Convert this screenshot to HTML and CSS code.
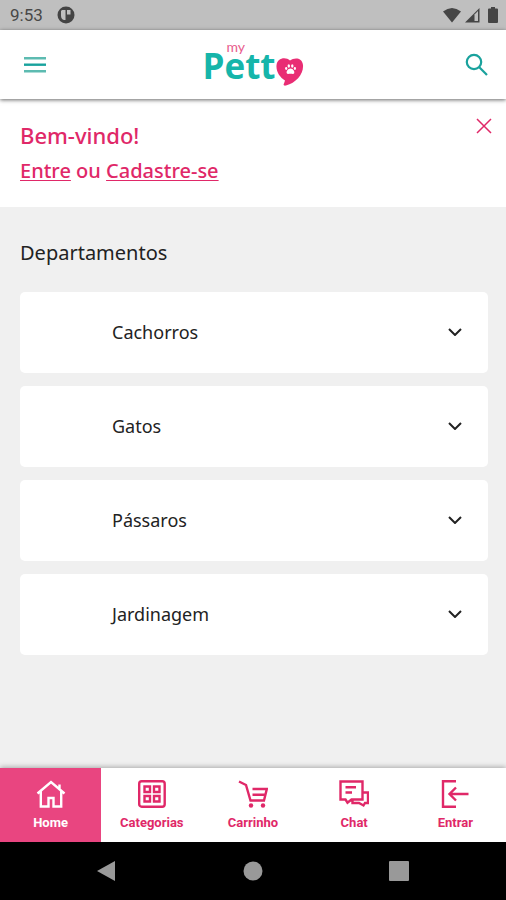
FILE: index.html
```html
<!DOCTYPE html>
<html lang="pt-BR">
<head>
<meta charset="utf-8">
<meta name="viewport" content="width=device-width, initial-scale=1">
<title>my Pett</title>
<link rel="stylesheet" href="styles.css">
</head>
<body>
<div class="status">
  <span class="clock">9:53</span>
  <svg class="notice" width="18" height="18" viewBox="0 0 18 18"><circle cx="9" cy="9" r="8.500" fill="#444"/><path d="M5 4h3.500v10H7C5 13.500 4 12 4 9.500V5zM10 4h3.500v4.500H10z" fill="#bfbfbf"/></svg>
  <span class="signals">
    <svg width="20" height="16" viewBox="0 0 20 16"><path d="M1 4.500Q10-2.500 19 4.500L10 15.500z" fill="#454545"/></svg>
    <svg width="16" height="16" viewBox="0 0 16 16"><path d="M1 15.500L15.500 1v14.500z" fill="#454545"/><path d="M10.500 7.500L14 4v10h-3.500z" fill="#bfbfbf"/></svg>
    <svg width="10" height="16" viewBox="0 0 10 16"><path d="M3 0h4v1.500h2q1 0 1 1V15q0 1-1 1H1q-1 0-1-1V2.500q0-1 1-1h2z" fill="#454545"/></svg>
  </span>
</div>
<header class="header">
  <button class="menu-button" aria-label="Menu"><svg width="24" height="18" viewBox="0 0 24 18" fill="none" stroke-width="2.400"><path d="M1 2.200h22M1 15.200h22" stroke="#5dbbb1"/><path d="M1 8.700h22" stroke="#18a29d"/></svg></button>
  <a class="logo" href="#">
    <span class="logo-text">
      <span class="logo-small">my</span>
      <span class="logo-word">Pett</span>
    </span>
    <svg width="28" height="30" viewBox="0 0 28 30"><path d="M14 3.500C18 .5 26 0 27 8c.8 9-7 18-17 20.500-2 .5-3-.5-2-2l1-3C4 20.500 0 15 .5 8.500 1 1 9.500-.5 14 3.500z" fill="#e92d74"/><g fill="#fff"><path d="M14.500 11.500c2.500 0 4.500 3 3.700 4.700-.6 1.200-2 .5-3.700.5s-3.100.7-3.700-.5c-.8-1.700 1.200-4.700 3.700-4.700z"/><ellipse cx="12.800" cy="9" rx="1.200" ry="1.700"/><ellipse cx="16.300" cy="9" rx="1.200" ry="1.700"/><ellipse cx="10.200" cy="11.500" rx="1.100" ry="1.400"/><ellipse cx="18.900" cy="11.500" rx="1.100" ry="1.400"/></g></svg>
  </a>
  <button class="search-button" aria-label="Buscar"><svg width="24" height="24" viewBox="0 0 24 24" fill="none" stroke="#1aa29d" stroke-width="2.200"><circle cx="9" cy="9" r="7.200"/><path d="M14.300 14.300l7.700 7.700"/></svg></button>
</header>
<main class="main">
  <section class="welcome">
    <div>
      <h1 class="greeting">Bem-vindo!</h1>
      <p class="access"><a href="#">Entre</a> ou <a href="#">Cadastre-se</a></p>
    </div>
    <button class="close" aria-label="Fechar"><svg width="16" height="16" viewBox="0 0 16 16" stroke="#e02868" stroke-width="1.500"><path d="M1 1l14 14M15 1L1 15"/></svg></button>
  </section>
  <section class="departments">
    <h2 class="heading">Departamentos</h2>
    <div class="list">
      <button class="card">Cachorros<svg class="chevron" viewBox="0 0 14 8"><path d="M1 1l6 6 6-6"/></svg></button>
      <button class="card">Gatos<svg class="chevron" viewBox="0 0 14 8"><path d="M1 1l6 6 6-6"/></svg></button>
      <button class="card">Pássaros<svg class="chevron" viewBox="0 0 14 8"><path d="M1 1l6 6 6-6"/></svg></button>
      <button class="card">Jardinagem<svg class="chevron" viewBox="0 0 14 8"><path d="M1 1l6 6 6-6"/></svg></button>
    </div>
  </section>
</main>
<nav class="tabs">
  <a class="tab active" href="#"><svg viewBox="0 0 30 28"><path d="M1.500 13.500L15 2l13.500 11.500M4.800 11.500V26.500h7.700v-8.500h5v8.500h7.700V11.500M23.500 9V4.500"/></svg>Home</a>
  <a class="tab" href="#"><svg viewBox="0 0 30 28"><rect x="2.200" y="1.200" width="25.500" height="25.500" rx="2.500"/><path d="M7.500 6.500h5.500v5.500H7.500zM17 6.500h5.500v5.500H17zM7.500 16h5.500v5.500H7.500zM17 16h5.500v5.500H17z"/></svg>Categorias</a>
  <a class="tab" href="#"><svg viewBox="0 0 30 28"><path d="M1 1.500l7 3.500 4.500 15.500h14.500M14.500 9h14.300l-2.800 11.500M14.500 14.800h12.500"/><g fill="currentColor" stroke="none"><circle cx="13" cy="25.500" r="2.200"/><circle cx="25" cy="25.500" r="2.200"/></g></svg>Carrinho</a>
  <a class="tab" href="#"><svg viewBox="0 0 30 28"><path d="M1.500 1.500h22v18H12.500l-4 3.200-2-3.200h-5zM6.500 7.200h10.500M6.500 12.500h6.500M23.500 12.500H29v10.500h-3l-1.500 2.500-4.500-2.500h-6.500v-3.500"/></svg>Chat</a>
  <a class="tab" href="#"><svg viewBox="0 0 30 28"><path d="M16 1.200H3v25.500h13M28.500 14H10M16 7.500L9.500 14l6.500 6.500"/></svg>Entrar</a>
</nav>
<div class="system">
  <button aria-label="Voltar"><svg width="20" height="22" viewBox="0 0 20 22"><path d="M0 11L18 1v20z"/></svg></button>
  <button aria-label="Início"><svg width="20" height="20" viewBox="0 0 20 20"><circle cx="10" cy="10" r="9.500"/></svg></button>
  <button aria-label="Recentes"><svg width="20" height="20" viewBox="0 0 20 20"><rect width="20" height="20" rx="1"/></svg></button>
</div>
</body>
</html>
```
FILE: styles.css
```css
* { box-sizing: border-box; }
body {
  margin: 0;
  min-height: 100vh;
  display: flex;
  flex-direction: column;
  background: #f0f0f0;
  color: #222;
  font-family: "Noto Sans", "Open Sans", sans-serif;
}
button {
  border: 0;
  padding: 0;
  background: none;
  color: inherit;
  font: inherit;
}
svg { display: block; }
h1, h2, p { margin: 0; font-weight: 500; }

.status {
  height: 30px;
  display: flex;
  align-items: center;
  gap: 14px;
  padding: 0 8px 0 10px;
  background: #bfbfbf;
  color: #484848;
  font: 400 17px/20px Roboto, sans-serif;
}
.signals {
  display: flex;
  gap: 8px;
  margin-left: auto;
}
.signals svg:first-child { margin-right: -6px; }

.header {
  position: relative;
  height: 69px;
  display: grid;
  grid-template-columns: 1fr auto 1fr;
  align-items: center;
  padding: 0 17px;
  background: #fff;
  box-shadow: 0 1px 4px rgba(0, 0, 0, 0.6);
}
.menu-button { justify-self: start; padding-left: 6px; }
.search-button { justify-self: end; }
.logo {
  display: flex;
  align-items: flex-end;
  text-decoration: none;
}
.logo-text {
  display: flex;
  flex-direction: column;
  padding-bottom: 6px;
}
.logo-word {
  color: #16b5aa;
  font: 700 35px/30px "Open Sans", sans-serif;
}
.logo-small {
  padding-left: 24px;
  color: #e85b8c;
  font: 400 14px/9px Lato, sans-serif;
}

.main { flex: 1; }
.welcome {
  display: flex;
  align-items: flex-start;
  justify-content: space-between;
  padding: 19px 14px 19px 20px;
  background: #fff;
  color: #e02868;
}
.greeting { font-size: 22px; line-height: 35px; }
.access { font-size: 20px; line-height: 35px; }
.access a {
  color: inherit;
  text-decoration-thickness: 1px;
  text-underline-offset: 2px;
}

.departments { padding: 31px 18px 40px 20px; }
.heading { font-size: 20px; line-height: 30px; font-weight: 400; }
.list {
  display: grid;
  gap: 13px;
  margin-top: 24px;
}
.card {
  height: 81px;
  display: flex;
  align-items: center;
  justify-content: space-between;
  padding: 0 26px 2px 92px;
  border-radius: 5px;
  background: #fff;
  font-size: 18px;
  font-weight: 400;
}
.chevron {
  width: 14px;
  height: 8px;
  fill: none;
  stroke: #222;
  stroke-width: 2;
}

.tabs {
  display: grid;
  grid-template-columns: repeat(5, 1fr);
  height: 74px;
  background: #fff;
  box-shadow: 0 -1px 5px rgba(0, 0, 0, 0.3);
}
.tab {
  display: flex;
  flex-direction: column;
  align-items: center;
  gap: 6px;
  padding-top: 12px;
  color: #e02868;
  font: 700 13px/17px Roboto, sans-serif;
  text-decoration: none;
}
.tab svg {
  width: 30px;
  height: 28px;
  fill: none;
  stroke: currentColor;
  stroke-width: 2.4;
}
.tab.active { background: #e94580; color: #fff; }

.system {
  height: 58px;
  display: flex;
  align-items: center;
  justify-content: space-between;
  padding: 0 97px;
  background: #000;
}
.system svg { fill: #999; }
```
